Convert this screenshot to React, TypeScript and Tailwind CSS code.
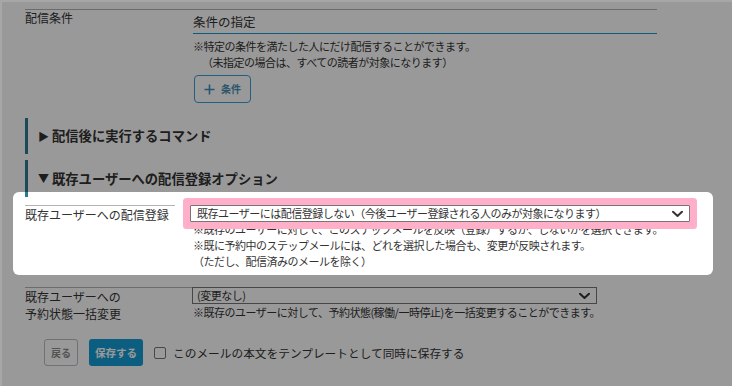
import React from "react";

const FONT = { fontFamily: '"Noto Sans CJK JP", "Noto Sans", sans-serif' };

function Chevron() {
  return (
    <svg width="11" height="7" viewBox="0 0 11 7" className="absolute right-[6px] top-1/2 -translate-y-1/2">
      <path d="M1 1.2 L5.5 5.5 L10 1.2" fill="none" stroke="#333" strokeWidth="2" strokeLinecap="round" strokeLinejoin="round" />
    </svg>
  );
}

export default function App() {
  return (
    <div className="w-[732px] h-[386px] bg-[#a7a7a7] pt-[2px] pl-[2px]" style={FONT}>
      <div className="relative w-[730px] h-[384px] bg-white overflow-hidden text-[#333]">
        <div className="pl-[23px] pt-[7px]">
          {/* Row 1 */}
          <div className="w-[632px] border-t border-[#b4b4b4] flex">
            <div className="w-[168px] text-[12px] leading-[16px]">配信条件</div>
            <div className="flex-1 flex flex-col">
              <div className="mt-[2px] h-[22px] leading-[20px] text-[12.5px] border-b border-[#1a95d0]">条件の指定</div>
              <div className="mt-[4px] text-[11px] tracking-[-0.5px] leading-[16px]">※特定の条件を満たした人にだけ配信することができます。</div>
              <div className="text-[11px] tracking-[-0.5px] leading-[16px] pl-[9px]">（未指定の場合は、すべての読者が対象になります）</div>
              <div className="mt-[5px] ml-[1px] w-[57px] h-[28px] border border-[#3a9fd6] rounded-[4px] flex items-center justify-center gap-[6px] text-[#4a8fb5] bg-white">
                <svg width="11" height="11" viewBox="0 0 11 11">
                  <path d="M5.5 0.5 V10.5 M0.5 5.5 H10.5" stroke="#3f8fbd" strokeWidth="1.6" />
                </svg>
                <span className="text-[10px] font-bold leading-none">条件</span>
              </div>
            </div>
          </div>

          {/* Section headers */}
          <div className="mt-[15px] h-[36px] border-l-[3px] border-[#2e7b91] flex items-center pl-[10px] text-[13.3px] font-bold">
            <span className="text-[11px] mr-[3px]">▶</span>配信後に実行するコマンド
          </div>
          <div className="mt-[6px] h-[37px] border-l-[3px] border-[#2e7b91] flex items-center pl-[10px] text-[13.3px] font-bold">
            <span className="text-[11px] mr-[3px]">▼</span>既存ユーザーへの配信登録オプション
          </div>

          {/* Row 2 */}
          <div className="mt-[8px] flex">
            <div className="w-[165px]">
              <div className="w-[150px] border-t border-[#b4b4b4] text-[12px] leading-[16px] pt-[1px]">既存ユーザーへの配信登録</div>
            </div>
            <div className="flex flex-col">
              <div className="relative z-10 w-[500px] h-[17px] border border-[#767676] bg-white rounded-[1px] shadow-[0_0_0_7px_#ffafc8]">
                <div className="pl-[6px] text-[11px] tracking-[-0.5px] leading-[15px] whitespace-nowrap">既存ユーザーには配信登録しない（今後ユーザー登録される人のみが対象になります）</div>
                <Chevron />
              </div>
              <div className="pl-[3px] text-[11px] tracking-[-0.5px] leading-[16px] whitespace-nowrap">
                <div className="-mt-[1px]">※既存のユーザーに対して、このステップメールを反映（登録）するか、しないかを選択できます。</div>
                <div>※既に予約中のステップメールには、どれを選択した場合も、変更が反映されます。</div>
                <div>（ただし、配信済みのメールを除く）</div>
              </div>
            </div>
          </div>

          {/* Row 3 */}
          <div className="mt-[18px] flex">
            <div className="w-[167px] border-t border-[#b4b4b4] text-[12px] leading-[17px]">
              <div>既存ユーザーへの</div>
              <div>予約状態一括変更</div>
            </div>
            <div className="flex flex-col border-t border-transparent -mt-[1px]">
              <div className="relative w-[405px] h-[17px] border border-[#767676] bg-white">
                <div className="pl-[4px] text-[11px] tracking-[-0.5px] leading-[15px]">(変更なし)</div>
                <Chevron />
              </div>
              <div className="pl-[1px] text-[11px] tracking-[-0.5px] leading-[16px] whitespace-nowrap">※既存のユーザーに対して、予約状態(稼働/一時停止)を一括変更することができます。</div>
            </div>
          </div>

          {/* Buttons */}
          <div className="mt-[17px] ml-[19px] flex items-center">
            <div className="w-[34px] h-[27px] border border-[#bdbdbd] rounded-[3px] bg-white flex items-center justify-center text-[10px] font-bold text-[#8a8a8a]">戻る</div>
            <div className="ml-[11px] w-[54px] h-[27px] rounded-[3px] bg-[#159dd6] flex items-center justify-center text-[10.5px] font-bold text-white">保存する</div>
            <div className="ml-[11px] w-[12px] h-[12px] border border-[#777] rounded-[2px] bg-white"></div>
            <div className="ml-[7px] text-[11.7px] leading-[16px] whitespace-nowrap">このメールの本文をテンプレートとして同時に保存する</div>
          </div>
        </div>

        {/* Spotlight overlay */}
        <div className="absolute z-20 left-[11px] top-[190px] w-[700px] h-[83px] rounded-[6px] pointer-events-none shadow-[0_0_0_1200px_rgba(0,0,0,0.4)]"></div>
      </div>
    </div>
  );
}
